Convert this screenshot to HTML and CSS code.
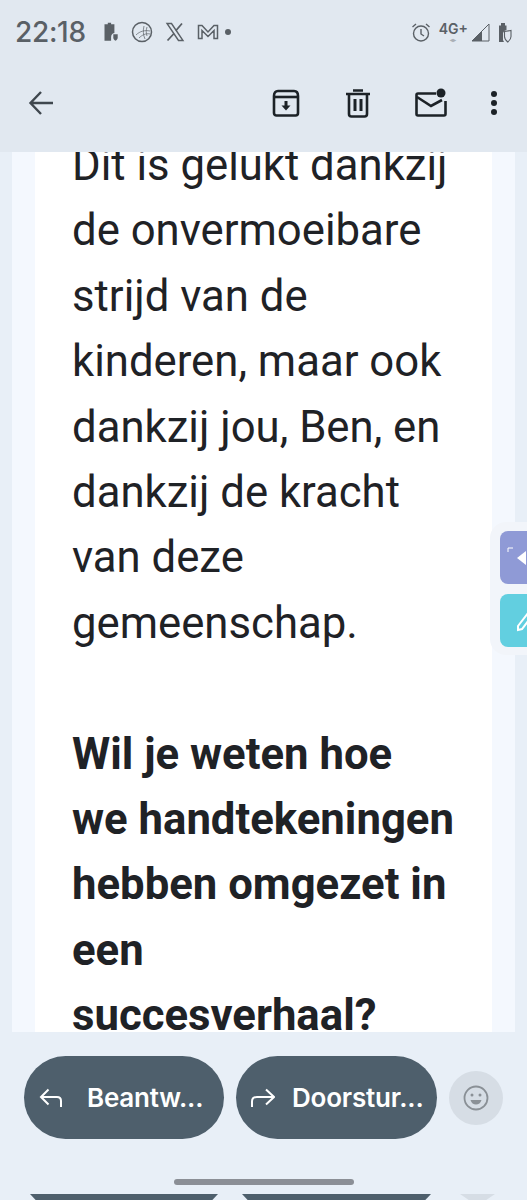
FILE: index.html
```html
<!DOCTYPE html>
<html lang="nl">

<head>
    <meta charset="UTF-8">
    <meta name="viewport" content="width=device-width, initial-scale=1.0">
    <title>E-mail</title>
    <link rel="stylesheet" href="styles.css">
</head>

<body>
    <header class="top">
        <div class="status">
            <span class="time">22:18</span>
            <div class="status-left">
                <svg width="18" height="22" viewBox="0 0 16 20"><path d="M3 3h3V1.500h3V3h3v8a4 4 0 0 0-3 4v3H3z" fill="#5a6066"/><path d="M11 12h4v3c0 1.500-1 2.500-2 3-1-.5-2-1.500-2-3z" fill="#5a6066"/></svg>
                <svg width="22" height="22" viewBox="0 0 22 22" fill="none" stroke="#5a6066"><circle cx="11" cy="11" r="9.500" stroke-width="1.500"/><path d="M5 14c4-4 9-5 14-4M8 17c3-3 7-5 11-4M13 5c-1 4-1 9 1 13M16 6c-1 3-1 6 0 9" stroke-width=".7"/></svg>
                <svg width="20" height="20" viewBox="0 0 20 20" fill="none" stroke="#5a6066"><path d="M2 1.500h4.500l11.500 17h-4.500z" stroke-width="1.400"/><path d="M17 1.500 11 8.500M9 11.500l-6.500 7" stroke-width="1.800"/></svg>
                <svg width="22" height="18" viewBox="0 0 22 18" fill="none" stroke="#5a6066" stroke-width="1.500"><path d="M1.500 15.500v-13h3.500l6 6.500 6-6.500h3.500v13h-3.500v-8l-6 6-6-6v8z"/></svg>
                <span class="dot"></span>
            </div>
            <div class="status-right">
                <svg width="20" height="21" viewBox="0 0 20 21" fill="none" stroke="#5a6066" stroke-width="1.400"><circle cx="10" cy="11.500" r="7.500"/><path d="M10 7v5l3 2"/><path d="M1.500 5 5 2M18.500 5 15 2"/></svg>
                <span class="net">4G+<i>◂▸</i></span>
                <svg class="signal" width="19" height="19" viewBox="0 0 19 19"><path d="M18 1v17H1z" fill="none" stroke="#5a6066" stroke-width="1"/><path d="M11 8v10H1z" fill="#5a6066"/></svg>
                <svg width="14" height="21" viewBox="0 0 14 21"><path d="M3 3.500V1h4v2.500h1.500V8A4 4 0 0 0 5 11v7l1 2H1V3.500z" fill="#5a6066"/><path d="M6.500 9.500 13 8.500v6c0 3-2 4.500-3.200 5.500-1.300-1-3.300-2.500-3.300-5.500z" fill="none" stroke="#5a6066" stroke-width="1.100"/></svg>
            </div>
        </div>
        <div class="toolbar">
            <svg class="back" width="28" height="28" viewBox="0 0 28 28" fill="none" stroke="#3f474e" stroke-width="2.400"><path d="M26 14H4M14 3 3.500 14 14 25"/></svg>
            <div class="actions">
                <svg width="30" height="30" viewBox="0 0 30 30" fill="none" stroke="#1c2227" stroke-width="2.600"><path d="M3 8c0-3 1.500-5 4-5h16c2.500 0 4 2 4 5v17c0 1.500-1 2.500-2.500 2.500h-19C4 27.500 3 26.500 3 25z"/><path d="M3 9h24"/><path d="M15 13v7" stroke-width="3"/><path d="M10.500 17.500h9L15 22.500z" fill="#1c2227" stroke="none"/></svg>
                <svg width="26" height="30" viewBox="0 0 26 30" fill="none" stroke="#1c2227" stroke-width="2.600"><path d="M1 6h24M8 2.500h10M4 6v20c0 1.500 1 2.500 2.500 2.500h13c1.500 0 2.500-1 2.500-2.500V6"/><path d="M10 11v12M16 11v12" stroke-width="3"/></svg>
                <svg width="32" height="30" viewBox="0 0 32 30" fill="none" stroke="#1c2227" stroke-width="2.600"><path d="M21 5.500H3a1.500 1.500 0 0 0-1.500 1.500v19a1.500 1.500 0 0 0 1.500 1.500h26a1.500 1.500 0 0 0 1.500-1.500V13"/><path d="m2 9 14 9 11-6"/><circle cx="26" cy="5" r="4.500" fill="#1c2227" stroke="none"/></svg>
                <span class="more"><i></i><i></i><i></i></span>
            </div>
        </div>
    </header>

    <main class="mail">
        <div class="mail-body">
            <p>Dit is gelukt dankzij de onvermoeibare strijd van de kinderen, maar ook dankzij jou, Ben, en dankzij de kracht van deze gemeenschap.</p>
            <p class="strong">Wil je weten hoe<br>we handtekeningen hebben omgezet in een<br>succesverhaal?</p>
        </div>
    </main>

    <div class="side-tabs">
        <span class="tab tab-share">
            <svg width="20" height="26" viewBox="0 0 20 26"><path d="M0 13 9 6v14z" fill="#fff"/><path d="M-4 3h-5v4" fill="none" stroke="#fff"/></svg>
        </span>
        <span class="tab tab-edit">
            <svg width="20" height="26" viewBox="0 0 20 26" fill="none" stroke="#fff" stroke-width="2"><path d="M1 22v-4L11 5l4 3L5 21z"/></svg>
        </span>
    </div>

    <footer class="bottom">
        <div class="replies">
            <button class="pill pill-reply">
                <svg width="24" height="20" viewBox="0 0 24 20" fill="none" stroke="#fff" stroke-width="2"><path d="M9.500 1.500 2 9l7.500 7.500M3 9h15c2.500 0 4 1.500 4 4v6"/></svg>
                <span>Beantw...</span>
            </button>
            <button class="pill pill-forward">
                <svg width="24" height="20" viewBox="0 0 24 20" fill="none" stroke="#fff" stroke-width="2"><path d="M15 1.500 23 9l-8 7.500M23 9H6c-3 0-5 1.500-5 4.500V19"/></svg>
                <span>Doorstur...</span>
            </button>
            <span class="emoji">
                <svg width="26" height="26" viewBox="0 0 26 26" fill="none" stroke="#8a9096" stroke-width="1.800"><circle cx="13" cy="13" r="11.500"/><circle cx="9" cy="10" r="1.500" fill="#8a9096" stroke="none"/><circle cx="17" cy="10" r="1.500" fill="#8a9096" stroke="none"/><path d="M7.500 15h11c-.8 3-3 4.500-5.500 4.500S8.300 18 7.500 15z" fill="#8a9096" stroke="none"/></svg>
            </span>
        </div>
        <div class="home-pill"></div>
        <div class="peek">
            <span class="peek-a"></span>
            <span class="peek-b"></span>
            <span class="peek-c"></span>
        </div>
    </footer>
</body>

</html>
```

FILE: styles.css
```css
* {
    box-sizing: border-box;
}

body {
    margin: 0;
    width: 527px;
    height: 1200px;
    overflow: hidden;
    position: relative;
    display: flex;
    flex-direction: column;
    background: #e8eff7;
    font-family: Inter, "Noto Sans", sans-serif;
    color: #1f2226;
}

.top {
    height: 152px;
    flex: none;
    background: #e1e8f0;
}

.status {
    height: 66px;
    padding: 0 15px 2px;
    display: flex;
    align-items: center;
    color: #5a6066;
}

.time {
    font-size: 28px;
    font-weight: 500;
    letter-spacing: -0.3px;
    margin-right: 15px;
}

.status-left {
    display: flex;
    align-items: center;
    gap: 12px;
}

.dot {
    width: 6px;
    height: 6px;
    margin-left: -6px;
    border-radius: 50%;
    background: #5a6066;
}

.status-right {
    margin-left: auto;
    padding-right: 0;
    display: flex;
    align-items: center;
    gap: 8px;
}

.net {
    display: flex;
    flex-direction: column;
    align-items: center;
    font-size: 14px;
    font-weight: 600;
    line-height: 14px;
    margin-right: -5px;
}

.net i {
    font-size: 6px;
    line-height: 7px;
    font-style: normal;
    color: #a9afb5;
}

.toolbar {
    height: 72px;
    padding: 2px 30px 0 27px;
    display: flex;
    align-items: center;
}

.actions {
    margin-left: auto;
    display: flex;
    align-items: center;
    gap: 44px;
}

.more {
    display: flex;
    flex-direction: column;
    gap: 3px;
}

.more i {
    width: 6px;
    height: 6px;
    border-radius: 50%;
    background: #1c2227;
}

.mail {
    height: 880px;
    flex: none;
    margin: 0 12px;
    padding: 0 23px;
    background: #f4f8fe;
    overflow: hidden;
}

.mail-body {
    height: 120%;
    margin-top: -19px;
    padding: 0 30px 0 37px;
    background: #fff;
    font-family: Roboto, sans-serif;
    font-size: 43.7px;
    line-height: 65.4px;
}

.mail-body p {
    margin: 0 0 65.4px;
}

.mail-body .strong {
    font-weight: 700;
}

.bottom {
    flex: 1;
    display: flex;
    flex-direction: column;
}

.replies {
    height: 83px;
    margin-top: 24px;
    padding: 0 24px;
    display: flex;
    align-items: center;
    gap: 12px;
}

.pill {
    height: 83px;
    border: none;
    border-radius: 42px;
    padding: 0 0 0 15px;
    background: #4e5f6c;
    color: #fff;
    display: flex;
    align-items: center;
    font-family: inherit;
    font-size: 26px;
    font-weight: 600;
}

.pill span {
    margin-left: 24px;
    letter-spacing: -0.2px;
}

.pill-reply {
    width: 200px;
}

.pill-forward {
    width: 201px;
}

.pill-forward span {
    margin-left: 17px;
}

.emoji {
    width: 54px;
    height: 54px;
    border-radius: 50%;
    background: #d6dde5;
    display: flex;
    align-items: center;
    justify-content: center;
}

.home-pill {
    width: 180px;
    height: 6px;
    margin: 40px auto 0;
    border-radius: 3px;
    background: #8b8f96;
}

.peek {
    height: 6px;
    margin-top: 9px;
    position: relative;
}

.peek span {
    position: absolute;
    top: 0;
    height: 6px;
    background: #4e5f6c;
    clip-path: polygon(0 0, 100% 0, 97% 100%, 3% 100%);
}

.peek-a {
    left: 30px;
    width: 188px;
}

.peek-b {
    left: 242px;
    width: 189px;
}

.peek .peek-c {
    left: 460px;
    width: 35px;
    background: #d6dde5;
    clip-path: polygon(0 0, 100% 0, 75% 100%, 25% 100%);
}

/* floating tabs at the screen edge */
.side-tabs {
    position: absolute;
    top: 522px;
    left: 490px;
    width: 60px;
    padding: 9px 0 8px 10px;
    display: flex;
    flex-direction: column;
    gap: 10px;
    background: #f2f5fa;
    border-radius: 16px;
}

.tab {
    width: 50px;
    height: 53px;
    border-radius: 8px;
    display: flex;
    align-items: center;
    padding-left: 17px;
}

.tab svg {
    overflow: visible;
}

.tab-share {
    background: #8f9ad6;
}

.tab-edit {
    background: #62cfe0;
}
```
